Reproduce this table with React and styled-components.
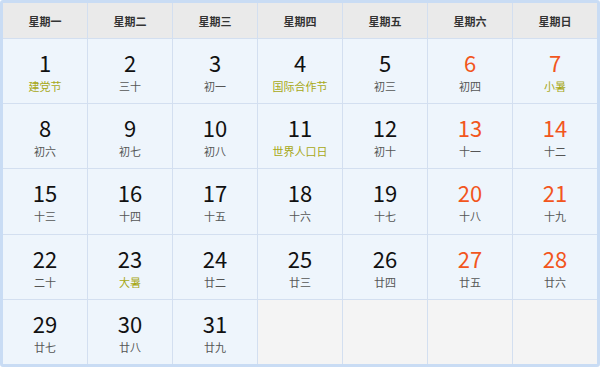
import React from "react";
import styled, { createGlobalStyle } from "styled-components";

const Global = createGlobalStyle`
  html, body { margin: 0; padding: 0; background: #ffffff; }
  body { font-family: "Noto Sans CJK SC", "Noto Sans", sans-serif; }
`;

const Calendar = styled.div`
  width: 600px;
  height: 367px;
  box-sizing: border-box;
  border: 3px solid #c9dcf4;
  border-radius: 3px;
  background: #d3dff0;
  display: grid;
  grid-template-columns: repeat(7, 1fr);
  grid-template-rows: 35px repeat(5, 1fr);
  gap: 1px;
`;

const HeadCell = styled.div`
  background: #eaeaea;
  display: flex;
  align-items: center;
  justify-content: center;
  font-size: 11px;
  font-weight: 700;
  color: #333;
`;

const DayCell = styled.div`
  background: ${(p) => (p.$empty ? "#f4f4f4" : "#eef5fc")};
  display: flex;
  flex-direction: column;
  align-items: center;
  justify-content: center;
  padding-bottom: 2px;
`;

const Num = styled.div`
  font-family: "Noto Sans CJK SC", "Open Sans", sans-serif;
  font-size: 22px;
  line-height: normal;
  color: ${(p) => (p.$weekend ? "#f2561d" : "#111")};
`;

const Sub = styled.div`
  font-size: 11px;
  line-height: normal;
  color: ${(p) => (p.$fest ? "#a8a816" : "#555")};
`;

const heads = ["星期一", "星期二", "星期三", "星期四", "星期五", "星期六", "星期日"];

const days = [
  ["建党节", true], ["三十"], ["初一"], ["国际合作节", true], ["初三"], ["初四"], ["小暑", true],
  ["初六"], ["初七"], ["初八"], ["世界人口日", true], ["初十"], ["十一"], ["十二"],
  ["十三"], ["十四"], ["十五"], ["十六"], ["十七"], ["十八"], ["十九"],
  ["二十"], ["大暑", true], ["廿二"], ["廿三"], ["廿四"], ["廿五"], ["廿六"],
  ["廿七"], ["廿八"], ["廿九"],
];

export default function App() {
  const cells = [];
  for (let i = 0; i < 35; i++) {
    if (i < days.length) {
      const [sub, fest] = days[i];
      const weekend = i % 7 >= 5;
      cells.push(
        <DayCell key={i}>
          <Num $weekend={weekend}>{i + 1}</Num>
          <Sub $fest={fest}>{sub}</Sub>
        </DayCell>
      );
    } else {
      cells.push(<DayCell key={i} $empty />);
    }
  }
  return (
    <>
      <Global />
      <Calendar>
        {heads.map((h) => (
          <HeadCell key={h}>{h}</HeadCell>
        ))}
        {cells}
      </Calendar>
    </>
  );
}
